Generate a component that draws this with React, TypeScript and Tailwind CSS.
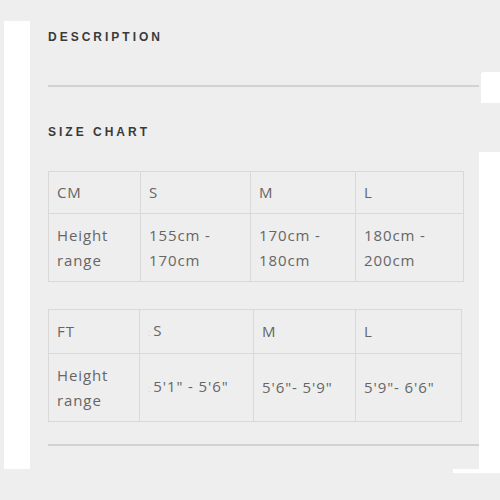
const cmRows = [
  ["CM", "S", "M", "L"],
  ["Height range", "155cm - 170cm", "170cm - 180cm", "180cm - 200cm"],
];

const ftRows = [
  ["FT", "S", "M", "L"],
  ["Height range", "5'1\" - 5'6\"", "5'6\"- 5'9\"", "5'9\"- 6'6\""],
];

const SizeTable = ({
  rows,
  widths,
  heights,
  dots,
}: {
  rows: string[][];
  widths: string[];
  heights: string[];
  dots?: boolean;
}) => (
  <table className="border-collapse border border-[#d9d9d9] text-[15px] leading-[25px] tracking-[0.9px] text-[#666666]">
    <tbody>
      {rows.map((row, ri) => (
        <tr key={ri} className={heights[ri]}>
          {row.map((cell, ci) => (
            <td
              key={ci}
              className={`${widths[ci]} border border-[#d9d9d9] px-[8px] align-middle`}
            >
              {dots && ci === 1 && <span className="mr-[2px] text-[9px] text-[#d0d0d0]">:</span>}
              {ci === 0 && ri === 1 ? (
                <>
                  Height
                  <br />
                  range
                </>
              ) : ci > 0 && ri === 1 && cell.includes("cm") ? (
                <>
                  {cell.split(" - ")[0]} -
                  <br />
                  {cell.split(" - ")[1]}
                </>
              ) : (
                cell
              )}
            </td>
          ))}
        </tr>
      ))}
    </tbody>
  </table>
);

export default function App() {
  return (
    <div
      className="relative flex h-[500px] w-[500px] overflow-hidden bg-[#eeeeee]"
      style={{ fontFamily: "'Open Sans', 'Liberation Sans', sans-serif" }}
    >
      <div className="ml-[4px] mt-[21px] h-[448px] w-[26px] shrink-0 bg-white" />
      <div className="ml-[18px] flex w-[431px] flex-col">
        <h3
          className="mt-[31px] text-[12px] font-bold leading-[12px] tracking-[3px] text-[#3a3a3a]"
          style={{ fontFamily: "'Liberation Sans', Arial, sans-serif" }}
        >
          DESCRIPTION
        </h3>
        <div className="mt-[42px] h-[2px] bg-[#d2d2d2]" />
        <h3
          className="mt-[39px] text-[12px] font-bold leading-[12px] tracking-[3px] text-[#3a3a3a]"
          style={{ fontFamily: "'Liberation Sans', Arial, sans-serif" }}
        >
          SIZE CHART
        </h3>
        <div className="mt-[33px]">
          <SizeTable
            rows={cmRows}
            widths={["w-[92px]", "w-[110px]", "w-[105px]", "w-[108px]"]}
            heights={["h-[42px]", "h-[68px]"]}
          />
        </div>
        <div className="mt-[27px]">
          <SizeTable
            rows={ftRows}
            widths={["w-[91px]", "w-[114px]", "w-[102px]", "w-[106px]"]}
            heights={["h-[44px]", "h-[68px]"]}
            dots
          />
        </div>
        <div className="mt-[22px] h-[2px] bg-[#d2d2d2]" />
      </div>
      {/* white bits on the right edge */}
      <div className="absolute left-[481px] top-[72px] h-[31px] w-[19px] rounded-tl-[3px] bg-white" />
      <div className="absolute left-[479px] top-[152px] h-[317px] w-[21px] bg-white" />
      <div className="absolute left-[453px] top-[469px] h-[4px] w-[47px] bg-white" />
    </div>
  );
}
